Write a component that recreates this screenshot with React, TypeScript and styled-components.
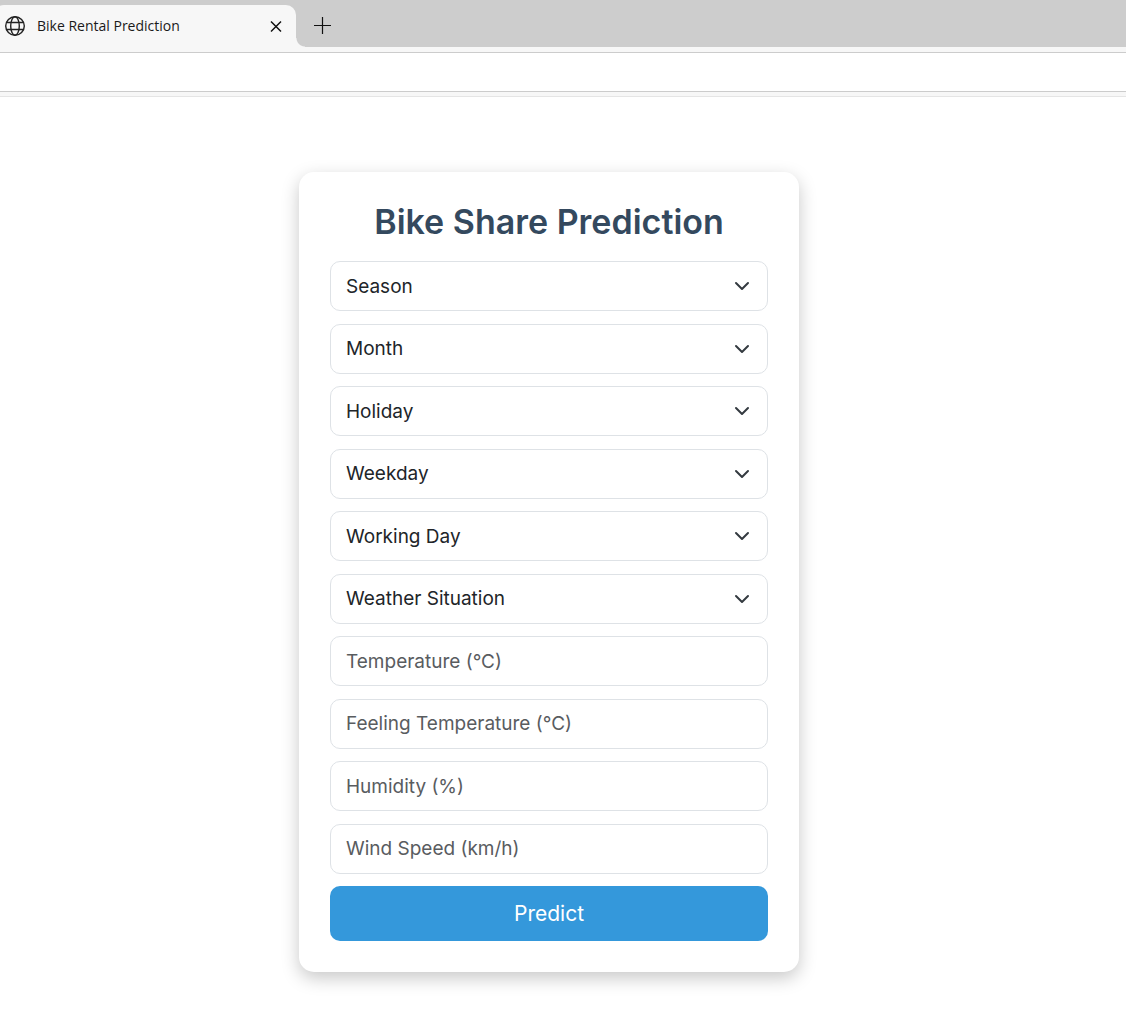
import React, { useState } from "react";
import styled, { createGlobalStyle } from "styled-components";

const GlobalStyle = createGlobalStyle`
  *, *::before, *::after { box-sizing: border-box; }
  body {
    margin: 0;
    background: #ffffff;
    color: #212529;
    font-family: Inter, "Liberation Sans", sans-serif;
    overflow-x: hidden;
  }
`;

const TabStrip = styled.header`
  display: flex;
  align-items: flex-end;
  height: 47px;
  background: #cdcdcd;
`;

const Tab = styled.div`
  position: relative;
  display: flex;
  align-items: center;
  gap: 11px;
  width: 302px;
  height: 42px;
  margin-left: -6px;
  padding: 0 12px 0 10px;
  border-radius: 10px 10px 0 0;
  background: #f7f7f7;

  &::after {
    content: "";
    position: absolute;
    left: 100%;
    bottom: 0;
    width: 9px;
    height: 9px;
    background: radial-gradient(circle at 100% 0, transparent 8px, #f7f7f7 9px);
  }
`;

const TabTitle = styled.span`
  flex: 1;
  color: #1a1a1a;
  font: 14px/20px "Open Sans", "Noto Sans", sans-serif;
`;

const IconButton = styled.button`
  display: flex;
  align-items: center;
  justify-content: center;
  width: 16px;
  height: 16px;
  padding: 0;
  border: 0;
  background: none;
  color: #111111;
`;

const NewTabButton = styled(IconButton)`
  width: 52px;
  height: 42px;
`;

const Toolbar = styled.div`
  height: 50px;
  padding: 5px 0 4px;
  border-bottom: 1px solid #e5e5e5;
  background: #f7f7f7;
`;

const AddressArea = styled.div`
  height: 40px;
  border: solid #cccccc;
  border-width: 1px 0;
  background: #ffffff;
`;

const Page = styled.main`
  display: flex;
  justify-content: center;
  padding: 75px 28px 42px 0;
`;

const Card = styled.section`
  display: flex;
  flex-direction: column;
  width: 100%;
  max-width: 500px;
  min-height: 800px;
  padding: 31px;
  border-radius: 15px;
  background: #ffffff;
  box-shadow: 0 6px 18px rgba(0, 0, 0, 0.22);
`;

const Title = styled.h1`
  margin: 0 0 20px;
  color: #34495e;
  font-size: 34px;
  font-weight: 600;
  line-height: 38px;
  text-align: center;
  white-space: nowrap;
`;

const Form = styled.form`
  display: flex;
  flex: 1;
  flex-direction: column;
  justify-content: space-between;
`;

const SelectBox = styled.div`
  display: grid;
  align-items: center;

  & > * { grid-area: 1 / 1; }
`;

const Select = styled.select`
  width: 100%;
  height: 50px;
  padding: 0 44px 0 15px;
  border: 1px solid #dee2e6;
  border-radius: 10px;
  appearance: none;
  background: #ffffff;
  color: #212529;
  font: inherit;
  font-size: 19px;
`;

const Chevron = styled.svg`
  justify-self: end;
  width: 16px;
  height: 16px;
  margin-right: 18px;
  pointer-events: none;
`;

const Input = styled.input`
  width: 100%;
  height: 50px;
  padding: 0 15px;
  border: 1px solid #dee2e6;
  border-radius: 10px;
  background: #ffffff;
  color: #212529;
  font: inherit;
  font-size: 19px;

  &::placeholder {
    color: #595c5f;
    opacity: 1;
  }
`;

const SubmitButton = styled.button`
  height: 55px;
  border: 0;
  border-radius: 10px;
  background: #3498db;
  color: #ffffff;
  font: inherit;
  font-size: 21px;
`;

const selects: { label: string; options: string[] }[] = [
  { label: "Season", options: ["Spring", "Summer", "Fall", "Winter"] },
  {
    label: "Month",
    options: [
      "January", "February", "March", "April", "May", "June",
      "July", "August", "September", "October", "November", "December",
    ],
  },
  { label: "Holiday", options: ["No", "Yes"] },
  {
    label: "Weekday",
    options: ["Sunday", "Monday", "Tuesday", "Wednesday", "Thursday", "Friday", "Saturday"],
  },
  { label: "Working Day", options: ["No", "Yes"] },
  { label: "Weather Situation", options: ["Clear", "Mist", "Light Rain", "Heavy Rain"] },
];

const inputs = ["Temperature (°C)", "Feeling Temperature (°C)", "Humidity (%)", "Wind Speed (km/h)"];

function SelectField({ label, options }: { label: string; options: string[] }) {
  const [value, setValue] = useState("");
  return (
    <SelectBox>
      <Select aria-label={label} value={value} onChange={(e) => setValue(e.target.value)}>
        <option value="" disabled>{label}</option>
        {options.map((option) => <option key={option}>{option}</option>)}
      </Select>
      <Chevron viewBox="0 0 16 16" fill="none" stroke="#343a40" strokeWidth="2" strokeLinecap="round" strokeLinejoin="round" aria-hidden="true">
        <path d="m2 5 6 6 6-6" />
      </Chevron>
    </SelectBox>
  );
}

export default function App() {
  return (
    <>
      <GlobalStyle />
      <TabStrip>
        <Tab>
          <svg width="22" height="22" viewBox="0 0 22 22" fill="none" stroke="#222222" strokeWidth="1.4" aria-hidden="true">
            <circle cx="11" cy="11" r="9.3" />
            <ellipse cx="11" cy="11" rx="4.3" ry="9.3" />
            <path d="M2.6 7.5h16.8M2.6 14.5h16.8" />
          </svg>
          <TabTitle>Bike Rental Prediction</TabTitle>
          <IconButton type="button" aria-label="Close tab">
            <svg width="16" height="16" viewBox="0 0 16 16" fill="none" stroke="currentColor" strokeWidth="1.5">
              <path d="m3 3.5 10 10M13 3.5l-10 10" />
            </svg>
          </IconButton>
        </Tab>
        <NewTabButton type="button" aria-label="New tab">
          <svg width="18" height="18" viewBox="0 0 18 18" fill="none" stroke="currentColor" strokeWidth="1.2">
            <path d="M9.5 0v17M1 8.5h17" />
          </svg>
        </NewTabButton>
      </TabStrip>
      <Toolbar>
        <AddressArea />
      </Toolbar>
      <Page>
        <Card>
          <Title>Bike Share Prediction</Title>
          <Form onSubmit={(e) => e.preventDefault()}>
            {selects.map((field) => <SelectField key={field.label} {...field} />)}
            {inputs.map((label) => <Input key={label} type="text" aria-label={label} placeholder={label} />)}
            <SubmitButton type="submit">Predict</SubmitButton>
          </Form>
        </Card>
      </Page>
    </>
  );
}
